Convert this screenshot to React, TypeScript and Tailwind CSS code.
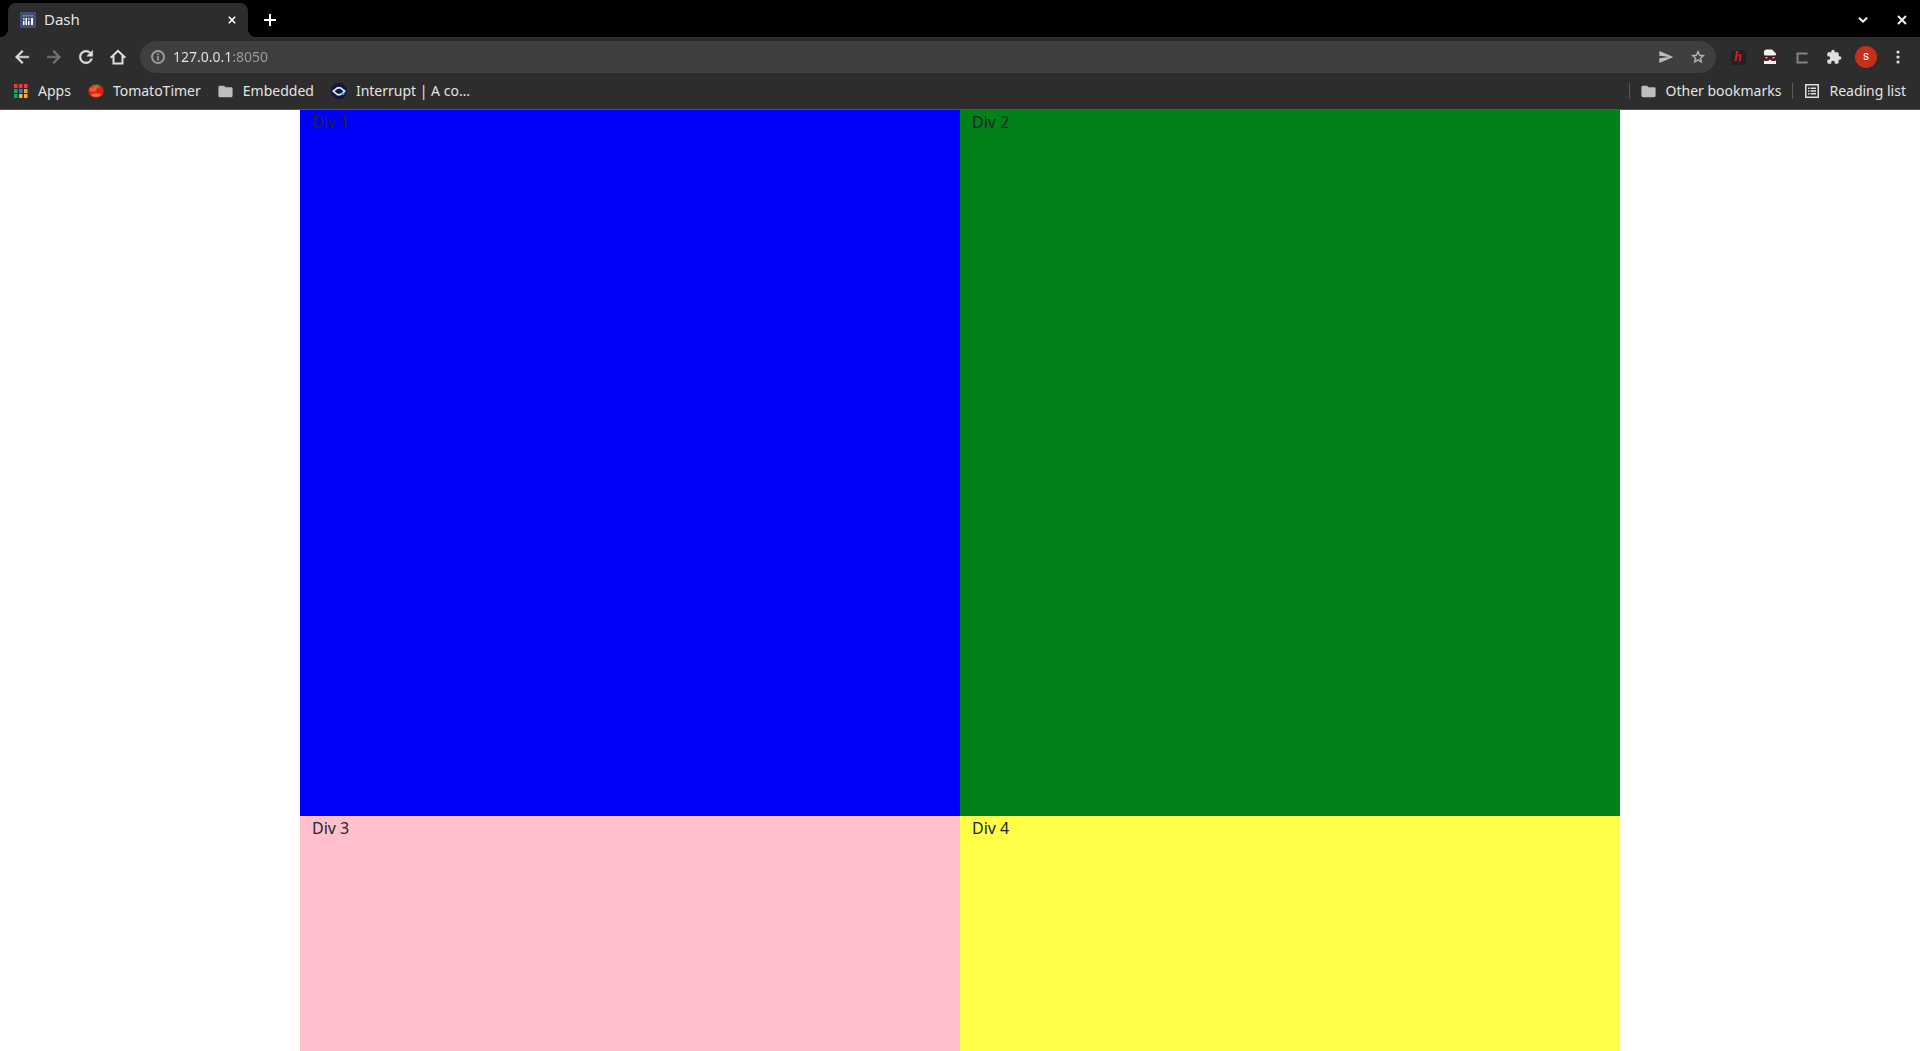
import type { ReactNode } from 'react';

function IconButton({ label, children }: { label: string; children: ReactNode }) {
  return (
    <button type="button" aria-label={label} className="flex h-8 w-8 shrink-0 items-center justify-center rounded-full text-[#e0e0e0]">
      {children}
    </button>
  );
}

function Glyph({ d, className }: { d: string; className: string }) {
  return (
    <svg viewBox="0 0 24 24" fill="currentColor" aria-hidden="true" className={className}>
      <path d={d} />
    </svg>
  );
}

const paths = {
  back: 'M20 11H7.83l5.59-5.59L12 4l-8 8 8 8 1.41-1.41L7.83 13H20v-2z',
  forward: 'M12 4l-1.41 1.41L16.17 11H4v2h12.17l-5.58 5.59L12 20l8-8z',
  reload:
    'M17.65 6.35C16.2 4.9 14.21 4 12 4c-4.42 0-7.99 3.58-7.99 8s3.57 8 7.99 8c3.73 0 6.84-2.55 7.73-6h-2.08c-.82 2.33-3.04 4-5.65 4-3.31 0-6-2.69-6-6s2.69-6 6-6c1.66 0 3.14.69 4.22 1.78L13 11h7V4l-2.35 2.35z',
  info: 'M11 7h2v2h-2zm0 4h2v6h-2zm1-9C6.48 2 2 6.48 2 12s4.48 10 10 10 10-4.48 10-10S17.52 2 12 2zm0 18c-4.41 0-8-3.59-8-8s3.59-8 8-8 8 3.59 8 8-3.59 8-8 8z',
  send: 'M2.01 21L23 12 2.01 3 2 10l15 2-15 2z',
  star: 'M22 9.24l-7.19-.62L12 2 9.19 8.63 2 9.24l5.46 4.73L5.82 21 12 17.27 18.18 21l-1.63-7.03L22 9.24zM12 15.4l-3.76 2.27 1-4.28-3.32-2.88 4.38-.38L12 6.1l1.71 4.04 4.38.38-3.32 2.88 1 4.28L12 15.4z',
  puzzle:
    'M20.5 11H19V7c0-1.1-.9-2-2-2h-4V3.5C13 2.12 11.88 1 10.5 1S8 2.12 8 3.5V5H4c-1.1 0-1.99.9-1.99 2v3.8H3.5c1.49 0 2.7 1.21 2.7 2.7s-1.21 2.7-2.7 2.7H2V20c0 1.1.9 2 2 2h3.8v-1.5c0-1.49 1.21-2.7 2.7-2.7 1.49 0 2.7 1.21 2.7 2.7V22H17c1.1 0 2-.9 2-2v-4h1.5c1.38 0 2.5-1.12 2.5-2.5S21.88 11 20.5 11z',
  folder: 'M10 4H4c-1.1 0-2 .9-2 2v12c0 1.1.9 2 2 2h16c1.1 0 2-.9 2-2V8c0-1.1-.9-2-2-2h-8l-2-2z',
};

function Cross({ className }: { className: string }) {
  return (
    <svg viewBox="0 0 10 10" fill="none" stroke="currentColor" strokeWidth="2" aria-hidden="true" className={className}>
      <path d="M1 1l8 8M9 1L1 9" />
    </svg>
  );
}

function DashIcon() {
  return (
    <svg viewBox="0 0 16 16" aria-hidden="true" className="h-4 w-4 shrink-0">
      <rect width="16" height="16" rx="1" fill="#3f4f75" />
      <path d="M3 9h1.5v4H3zM5.5 6H7v7H5.5zM8 9h1.5v4H8zM11 6h2v7h-2z" fill="#fff" />
      <path d="M3 6h1.5v2H3zM8 6h1.5v2H8z" fill="#b9c6d8" />
      <path d="M3 3h1.5v1.5H3zM5.5 3H7v1.5H5.5zM8 3h1.5v1.5H8zM11 3h2v1.5h-2z" fill="#72a6b4" />
    </svg>
  );
}

const appColors = ['#f8343c', '#f8343c', '#f8343c', '#1aa260', '#1a80e8', '#f5a12c', '#1aa260', '#fbaa35', '#fbaa35'];

function AppsIcon() {
  return (
    <svg viewBox="0 0 14 14" aria-hidden="true" className="h-3.5 w-3.5">
      {appColors.map((fill, i) => (
        <rect key={i} x={(i % 3) * 5} y={Math.floor(i / 3) * 5} width="3.500" height="4" fill={fill} />
      ))}
    </svg>
  );
}

function TomatoIcon() {
  return (
    <svg viewBox="0 0 16 16" aria-hidden="true" className="h-4 w-4">
      <ellipse cx="8" cy="8" rx="7.800" ry="6.600" fill="#e01e10" />
      <ellipse cx="5" cy="6.500" rx="3.500" ry="2.400" fill="#f4523e" />
      <ellipse cx="8" cy="12" rx="4.800" ry="1.800" fill="#f8604a" />
      <path d="M8 2.600L4.500 1.600l1.200 1.700L3.300 4.600l3.300-.2L7.500 6.500l1.400-2.100 3.400.8-1.800-1.800 1.800-1.600-3 .500L8.500.500z" fill="#6a9a30" />
    </svg>
  );
}

function InterruptIcon() {
  return (
    <svg viewBox="0 0 16 16" aria-hidden="true" className="h-4 w-4">
      <circle cx="8" cy="8" r="8" fill="#15163f" />
      <path d="M2.200 8.200L6.500 4.800h3L13.800 8.200 9.500 11.600h-3z" fill="none" stroke="#dcf3f5" strokeWidth="1.700" strokeLinejoin="round" />
      <path d="M9.800 12l1.200-2.500 3 .700-1.500 1.800z" fill="#24b7bd" />
    </svg>
  );
}

function MaskIcon() {
  return (
    <svg viewBox="0 0 16 16" aria-hidden="true" className="h-4 w-4">
      <path d="M2 3q0-2.500 2.500-2.500H10l4 4V15H2z" fill="#f1f1f1" />
      <path d="M.500 6q7.500 1 15 0v3q-.500 3-3.500 3-3 0-4-1.500Q7 12 4 12 1 12 .500 9z" fill="#4b1a1f" />
      <path d="M3 8.400q2-.600 3 .600-2 1-3-.600zM13 8.400q-2-.600-3 .600 2 1 3-.600z" fill="#f4eded" />
    </svg>
  );
}

function ReadingListIcon() {
  return (
    <svg viewBox="0 0 14 14" aria-hidden="true" className="h-3.5 w-3.5">
      <rect x="0.750" y="0.750" width="12.500" height="12.500" fill="none" stroke="#e0e0e0" strokeWidth="1.500" />
      <path d="M3 3.500h1.500V5H3zM5.500 3.500H11V5H5.500zM3 6.300h1.500v1.500H3zM5.500 6.300H11v1.500H5.500zM3 9h1.500v1.500H3zM5.500 9H11v1.500H5.500z" fill="#e0e0e0" />
    </svg>
  );
}

function Bookmark({ icon, children }: { icon: ReactNode; children: ReactNode }) {
  return (
    <a href="#" className="flex items-center gap-[9px] whitespace-nowrap">
      <span className="flex w-4 shrink-0 justify-center">{icon}</span>
      {children}
    </a>
  );
}

const folder = <Glyph d={paths.folder} className="h-[17px] w-[17px] shrink-0 text-[#bdbdbd]" />;

function Browser() {
  return (
    <header className="bg-[#2d2d2d] text-sm leading-5 text-[#e4e4e4]">
      <div className="flex h-[37px] items-end justify-between bg-black pr-[10px] pl-2">
        <div className="flex h-[34px] items-center">
          <div role="tab" aria-selected="true" className="relative flex h-full w-60 items-center gap-2 rounded-t-lg bg-[#2d2d2d] pr-2 pl-3">
            <span className="absolute bottom-0 -left-2 h-2 w-2 bg-[radial-gradient(circle_at_top_left,transparent_8px,#2d2d2d_8px)]" />
            <DashIcon />
            <span className="flex-1 pb-0.5 text-[15px]">Dash</span>
            <button type="button" aria-label="Close tab" className="flex h-4 w-4 items-center justify-center text-white">
              <Cross className="h-2 w-2" />
            </button>
            <span className="absolute -right-2 bottom-0 h-2 w-2 bg-[radial-gradient(circle_at_top_right,transparent_8px,#2d2d2d_8px)]" />
          </div>
          <button type="button" aria-label="New tab" className="ml-2 flex h-7 w-7 items-center justify-center text-white">
            <svg viewBox="0 0 12 12" stroke="currentColor" strokeWidth="2" aria-hidden="true" className="h-3 w-3">
              <path d="M6 0v12M0 6h12" />
            </svg>
          </button>
        </div>
        <div className="flex h-[34px] items-center gap-[23px] text-[#f0f0f0]">
          <button type="button" aria-label="Search tabs" className="flex h-4 w-4 items-center justify-center">
            <svg viewBox="0 0 10 6" fill="none" stroke="currentColor" strokeWidth="2" aria-hidden="true" className="h-1.5 w-2.5">
              <path d="M1 .700l4 4 4-4" />
            </svg>
          </button>
          <button type="button" aria-label="Close window" className="flex h-4 w-4 items-center justify-center">
            <Cross className="h-2.5 w-2.5" />
          </button>
        </div>
      </div>

      <div className="flex h-10 items-center px-1.5">
        <IconButton label="Back"><Glyph d={paths.back} className="h-5 w-5 stroke-current stroke-[0.6]" /></IconButton>
        <IconButton label="Forward"><Glyph d={paths.forward} className="h-5 w-5 stroke-current stroke-[0.6] text-[#777]" /></IconButton>
        <IconButton label="Reload"><Glyph d={paths.reload} className="h-5 w-5 stroke-current stroke-[0.6]" /></IconButton>
        <IconButton label="Home">
          <svg viewBox="0 0 16 16" fill="none" stroke="currentColor" strokeWidth="2" aria-hidden="true" className="h-4 w-4">
            <path d="M.700 8.800L8 1.800l7.300 7M3.500 7v7.500h9V7" />
          </svg>
        </IconButton>
        <form className="mx-1.5 flex h-8 flex-1 items-center rounded-full bg-[#3f3f3f] pr-0.5 pl-2.5">
          <Glyph d={paths.info} className="h-4 w-4 shrink-0 stroke-current stroke-[0.6] text-[#a5a8ad]" />
          <input
            aria-label="Address"
            defaultValue="127.0.0.1:8050"
            className="ml-[7px] min-w-0 flex-1 bg-linear-to-r from-[#e8e8e8] from-[57px] to-[#9c9c9c] to-[57px] bg-clip-text text-transparent outline-none"
          />
          <IconButton label="Send to your devices"><Glyph d={paths.send} className="h-4 w-4 text-[#bdbdbd]" /></IconButton>
          <IconButton label="Bookmark this page"><Glyph d={paths.star} className="h-4 w-4 stroke-current stroke-[0.4] text-[#bdbdbd]" /></IconButton>
        </form>
        <IconButton label="Hypothesis">
          <span className="flex h-[15px] w-[15px] items-center justify-center rounded-xs bg-[#222] font-['Liberation_Serif',serif] text-sm leading-none font-bold text-[#d51c2b] italic">h</span>
        </IconButton>
        <IconButton label="Mask"><MaskIcon /></IconButton>
        <IconButton label="Clipper">
          <svg viewBox="0 0 12 12" fill="none" stroke="#858585" strokeWidth="2" aria-hidden="true" className="mt-0.5 h-3 w-3">
            <path d="M11.500 1.500H1.500v9h10" />
          </svg>
        </IconButton>
        <IconButton label="Extensions"><Glyph d={paths.puzzle} className="h-4 w-4" /></IconButton>
        <IconButton label="Profile">
          <span className="flex h-[22px] w-[22px] items-center justify-center rounded-full bg-[#c5301c] font-[Roboto,sans-serif] text-[9px] leading-none font-medium text-white">S</span>
        </IconButton>
        <IconButton label="Menu">
          <svg viewBox="0 0 4 14" fill="currentColor" aria-hidden="true" className="h-3.5 w-1">
            <circle cx="2" cy="2" r="1.600" /><circle cx="2" cy="7" r="1.600" /><circle cx="2" cy="12" r="1.600" />
          </svg>
        </IconButton>
      </div>

      <nav aria-label="Bookmarks" className="flex h-[33px] items-center justify-between border-b border-[#555] pr-3.5 pb-1 pl-[13px]">
        <div className="flex items-center gap-[17px]">
          <Bookmark icon={<AppsIcon />}>Apps</Bookmark>
          <Bookmark icon={<TomatoIcon />}>TomatoTimer</Bookmark>
          <Bookmark icon={folder}>Embedded</Bookmark>
          <Bookmark icon={<InterruptIcon />}>Interrupt | A co…</Bookmark>
        </div>
        <div className="flex items-center gap-[11px]">
          <span className="h-4 w-px bg-[#5a5a5a]" />
          <Bookmark icon={folder}>Other bookmarks</Bookmark>
          <span className="h-4 w-px bg-[#5a5a5a]" />
          <Bookmark icon={<ReadingListIcon />}>Reading list</Bookmark>
        </div>
      </nav>
    </header>
  );
}

export default function App() {
  return (
    <div className="flex h-screen flex-col overflow-hidden bg-white font-['Noto_Sans',sans-serif]">
      <Browser />
      <main className="mx-auto grid w-full max-w-[1320px] flex-1 grid-cols-2 grid-rows-[3fr_1fr] text-base leading-6 text-[#212529]">
        <div className="bg-[#0000fa] px-3">Div 1</div>
        <div className="bg-[#00811a] px-3">Div 2</div>
        <div className="bg-[#ffc0cb] px-3">Div 3</div>
        <div className="bg-[#ffff48] px-3">Div 4</div>
      </main>
    </div>
  );
}
